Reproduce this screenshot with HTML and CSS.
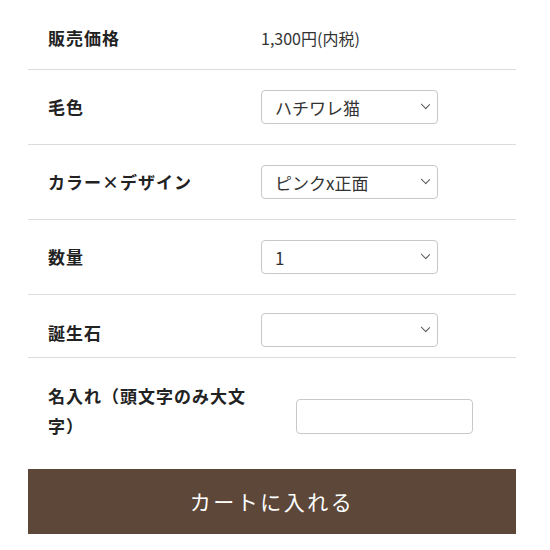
FILE: index.html
```html
<!DOCTYPE html>
<html lang="ja">
<head>
    <meta charset="UTF-8">
    <meta name="viewport" content="width=device-width, initial-scale=1.0">
    <title>商品オプション</title>
    <link rel="stylesheet" href="styles.css">
</head>
<body>
    <div class="product-form">
        <!-- 価格 -->
        <div class="row row-price">
            <div class="label">販売価格</div>
            <div class="value">1,300円(内税)</div>
        </div>

        <!-- オプション -->
        <div class="row row-option">
            <div class="label">毛色</div>
            <div class="value">
                <div class="select-wrap">
                    <select>
                        <option>ハチワレ猫</option>
                    </select>
                </div>
            </div>
        </div>
        <div class="row row-option">
            <div class="label">カラー×デザイン</div>
            <div class="value">
                <div class="select-wrap">
                    <select>
                        <option>ピンクx正面</option>
                    </select>
                </div>
            </div>
        </div>
        <div class="row row-option">
            <div class="label">数量</div>
            <div class="value">
                <div class="select-wrap">
                    <select>
                        <option>1</option>
                    </select>
                </div>
            </div>
        </div>
        <div class="row row-stone">
            <div class="label">誕生石</div>
            <div class="value">
                <div class="select-wrap">
                    <select>
                        <option></option>
                    </select>
                </div>
            </div>
        </div>

        <!-- 名入れ -->
        <div class="row row-name">
            <div class="label">名入れ（頭文字のみ大文字）</div>
            <div class="value">
                <input type="text" class="text-input">
            </div>
        </div>

        <button class="cart-button">カートに入れる</button>
    </div>
</body>
</html>
```

FILE: styles.css
```css
body {
    margin: 0;
    background: #fff;
    color: #222;
    font-family: "Noto Sans CJK JP", "Noto Sans", sans-serif;
}
.product-form {
    width: 488px;
    margin-left: 28px;
}
.row {
    display: flex;
    align-items: center;
    box-sizing: border-box;
    border-bottom: 1px solid #dcdcdc;
}
.label {
    width: 233px;
    box-sizing: border-box;
    padding-left: 20px;
    font-size: 17px;
    font-weight: bold;
    letter-spacing: 1px;
    line-height: 30px;
}
.value {
    font-size: 16px;
    line-height: 24px;
    color: #333;
}
.row-price {
    height: 70px;
    padding-top: 7px;
}
.row-option {
    height: 75px;
}
.row-stone {
    height: 63px;
    padding-top: 8px;
}
.row-stone .label {
    padding-top: 6px;
}
.row-name {
    align-items: flex-start;
    border-bottom: none;
    padding: 23px 0 28px;
}
.row-name .label {
    width: 268px;
    padding-right: 46px;
}
.row-name .value {
    padding-top: 18px;
}
.select-wrap {
    position: relative;
    width: 177px;
}
.select-wrap::after {
    content: "";
    position: absolute;
    right: 9px;
    top: 11px;
    width: 6px;
    height: 6px;
    border-right: 1px solid #555;
    border-bottom: 1px solid #555;
    transform: rotate(45deg) scaleY(0.9);
    pointer-events: none;
}
.select-wrap select {
    appearance: none;
    -webkit-appearance: none;
    width: 177px;
    height: 34px;
    padding: 0 13px;
    border: 1px solid #c8c8c8;
    border-radius: 4px;
    background: #fff;
    font-family: "Noto Sans CJK JP", "Noto Sans", sans-serif;
    font-size: 17px;
    color: #333;
}
.text-input {
    display: block;
    width: 177px;
    height: 35px;
    box-sizing: border-box;
    border: 1px solid #c8c8c8;
    border-radius: 4px;
    padding: 0 10px;
}
.cart-button {
    display: block;
    width: 488px;
    height: 65px;
    padding-bottom: 3px;
    border: none;
    background-color: #5c4739;
    color: #fff;
    font-family: "Noto Sans CJK JP", "Noto Sans", sans-serif;
    font-size: 21px;
    letter-spacing: 2.5px;
    cursor: pointer;
}
```
